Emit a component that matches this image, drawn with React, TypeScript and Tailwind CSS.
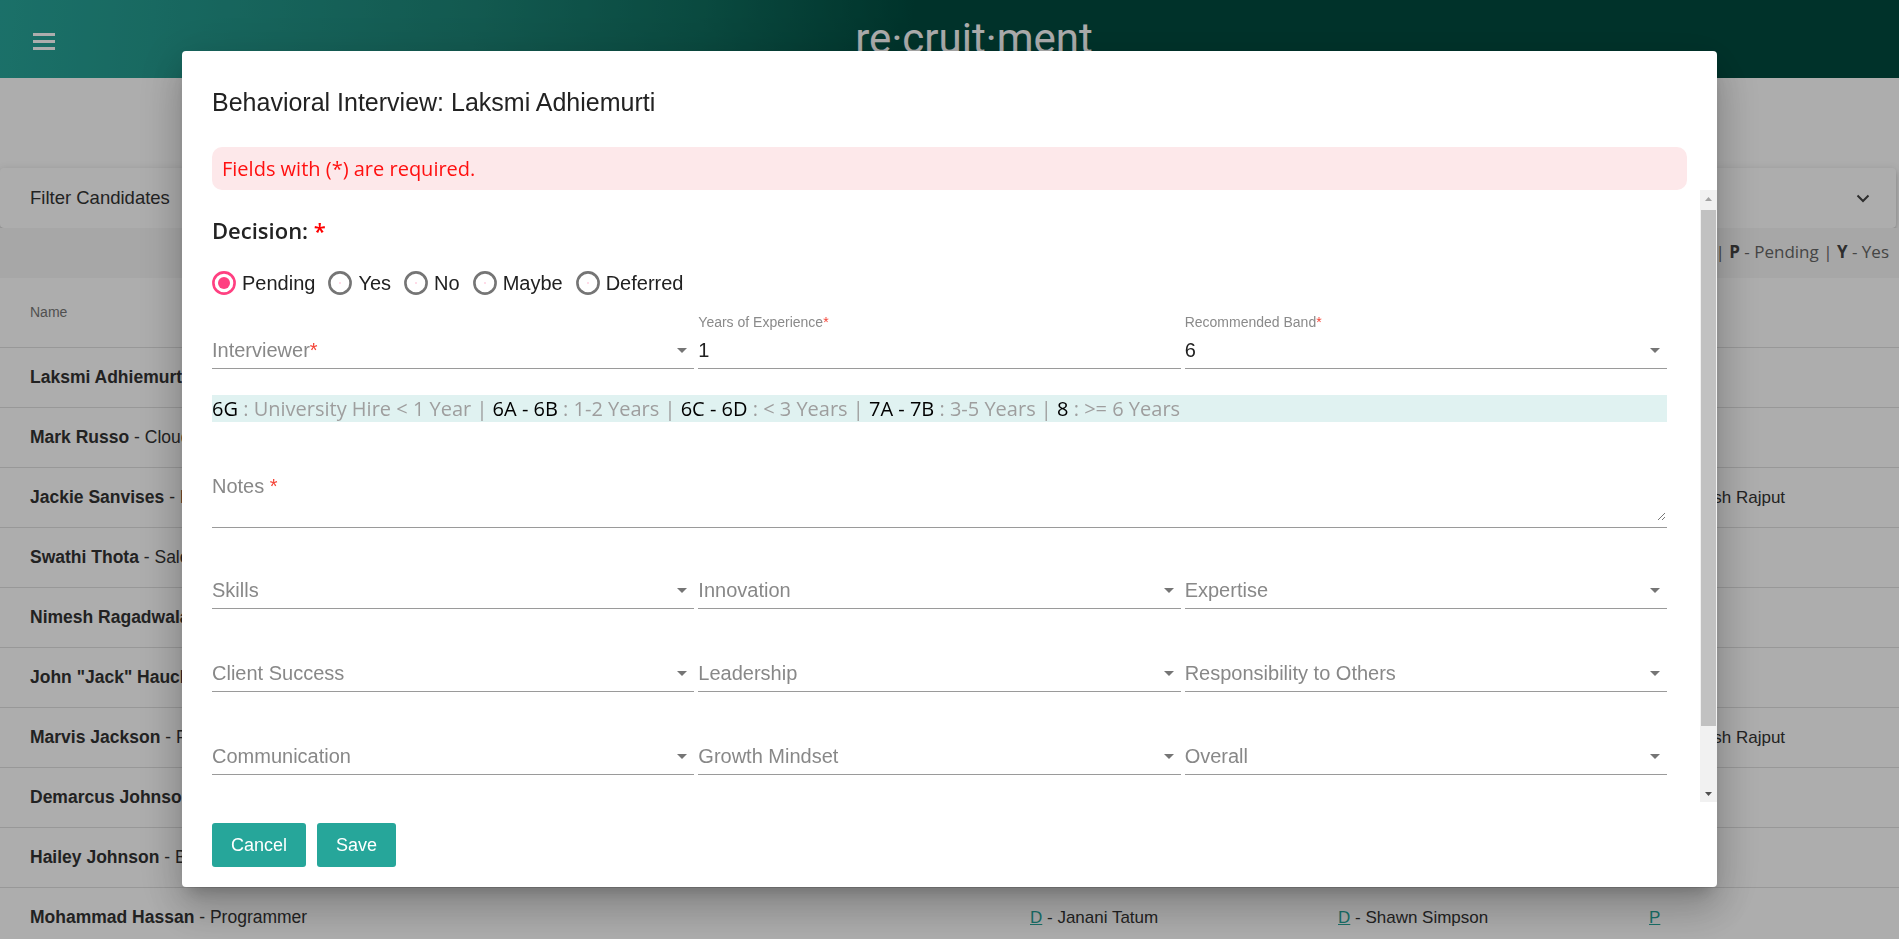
import type React from "react";

const sans = "font-['Liberation_Sans',Arial,sans-serif]";
const open = "font-['Open_Sans',sans-serif]";

type Candidate = {
  name: string;
  role: string;
  first?: string;
  second?: string;
  decision?: string;
};

const candidates: Candidate[] = [
  { name: "Laksmi Adhiemurti", role: "Programmer", first: "Janani Tatum", decision: "P" },
  { name: "Mark Russo", role: "Cloud Architect", first: "Shawn Simpson", decision: "P" },
  { name: "Jackie Sanvises", role: "IT Consultant", first: "Janani Tatum", decision: "Haresh Rajput" },
  { name: "Swathi Thota", role: "Sales Engineer", second: "Shawn Simpson", decision: "P" },
  { name: "Nimesh Ragadwala", role: "Data Scientist", first: "Janani Tatum", decision: "P" },
  { name: 'John "Jack" Hauck', role: "Developer", second: "Shawn Simpson", decision: "P" },
  { name: "Marvis Jackson", role: "Project Manager", first: "Janani Tatum", decision: "Haresh Rajput" },
  { name: "Demarcus Johnson", role: "Designer", first: "Shawn Simpson", decision: "P" },
  { name: "Hailey Johnson", role: "Business Analyst", second: "Janani Tatum", decision: "P" },
  { name: "Mohammad Hassan", role: "Programmer", first: "Janani Tatum", second: "Shawn Simpson", decision: "P" },
];

const Link: React.FC<{ code: string; who?: string }> = ({ code, who }) => (
  <span className="text-[17px] text-[#333]">
    <span className="text-[#26a69a] underline">{code}</span>
    {who && <> - {who}</>}
  </span>
);

const Radio: React.FC<{ label: string; checked?: boolean }> = ({ label, checked }) => (
  <label className="mr-[13px] flex items-center gap-[6px]">
    <svg width="24" height="24" viewBox="0 0 24 24">
      <circle
        cx="12"
        cy="12"
        r="10.6"
        fill="none"
        stroke={checked ? "#ff4081" : "#757575"}
        strokeWidth="2.6"
      />
      {checked ? (
        <circle cx="12" cy="12" r="6" fill="#ff4081" />
      ) : (
        <circle cx="12" cy="12" r="0.7" fill="#ff4081" opacity="0.5" />
      )}
    </svg>
    <span className="text-[20px] leading-[24px] text-[#212121]">{label}</span>
  </label>
);

const Req = () => <span className="text-[#f44336]">*</span>;

const Arrow = () => (
  <svg width="10" height="5" viewBox="0 0 10 5" className="mr-[7px] shrink-0">
    <path d="M0 0h10L5 5z" fill="#757575" />
  </svg>
);

// Material-ish select / input with an underline; `floating` reserves the label line
const Field: React.FC<{
  label: string;
  value?: string;
  required?: boolean;
  arrow?: boolean;
  floating?: boolean;
}> = ({ label, value, required, arrow = true, floating }) => (
  <div className="flex flex-col border-b border-[#9a9a9a] pb-[6px]">
    {floating && (
      <div className="mb-[8px] h-[16px] text-[14px] leading-[16px] text-[#8a8a8a]">
        {value && (
          <>
            {label}
            {required && <Req />}
          </>
        )}
      </div>
    )}
    <div className="flex h-[24px] items-center">
      <span
        className={`flex-1 text-[20px] leading-[24px] ${
          value ? "text-[#212121]" : "text-[#888]"
        }`}
      >
        {value ?? (
          <>
            {label}
            {required && <Req />}
          </>
        )}
      </span>
      {arrow && <Arrow />}
    </div>
  </div>
);

const bands: [string, string][] = [
  ["6G", "University Hire < 1 Year"],
  ["6A - 6B", "1-2 Years"],
  ["6C - 6D", "< 3 Years"],
  ["7A - 7B", "3-5 Years"],
  ["8", ">= 6 Years"],
];

const App: React.FC = () => {
  return (
    <div className={`relative h-screen w-full overflow-hidden bg-white ${sans}`}>
      {/* App bar */}
      <header className="flex h-[78px] items-start bg-[linear-gradient(95deg,#28a69b_0%,#1c8476_25%,#0f6d5e_37%,#004b3f_48%,#004b3f_100%)]">
        <div className="ml-[33px] mt-[33px] flex flex-col gap-[4px]">
          <span className="h-[3px] w-[22px] bg-white" />
          <span className="h-[3px] w-[22px] bg-white" />
          <span className="h-[3px] w-[22px] bg-white" />
        </div>
        <div className="flex-1 pr-[6px] pt-[14px] text-center font-['Roboto',sans-serif] text-[42px] font-normal leading-[49px] text-white">
          re·cruit·ment
        </div>
      </header>

      {/* Filter panel */}
      <div className="mr-[3px] mt-[90px] flex h-[60px] items-center justify-between rounded-[4px] bg-white pl-[30px] pr-[26px] shadow-[0_3px_3px_-2px_rgba(0,0,0,0.2),0_3px_4px_0_rgba(0,0,0,0.14),0_1px_8px_0_rgba(0,0,0,0.12)]">
        <span className="text-[18.5px] text-[#333]">Filter Candidates</span>
        <svg width="14" height="9" viewBox="0 0 14 9">
          <path d="M1.5 1.5 7 7l5.5-5.5" fill="none" stroke="#444" strokeWidth="2" />
        </svg>
      </div>

      {/* Legend */}
      <div className={`flex h-[50px] items-center justify-end bg-[#f7f7f7] pb-[2px] pr-[10px] text-[17px] text-[#666] ${open}`}>
        <b className="text-[#444]">A</b>&nbsp;- Accepted |&nbsp;<b className="text-[#444]">D</b>&nbsp;- Declined |&nbsp;
        <b className="text-[#444]">M</b>&nbsp;- Maybe |&nbsp;<b className="text-[#444]">N</b>&nbsp;- No |&nbsp;
        <b className="text-[#444]">P</b>&nbsp;- Pending |&nbsp;<b className="text-[#444]">Y</b>&nbsp;- Yes
      </div>

      {/* Candidate table */}
      <div className="grid h-[70px] grid-cols-[1000px_308px_311px_1fr] items-center border-b border-[#e0e0e0] pl-[30px] text-[14px] text-[#777]">
        <span>Name</span>
        <span>First Interview</span>
        <span>Second Interview</span>
        <span>Decision</span>
      </div>
      {candidates.map((c) => (
        <div
          key={c.name}
          className="grid h-[60px] grid-cols-[1000px_308px_311px_1fr] items-center border-b border-[#e0e0e0] pl-[30px]"
        >
          <span className="whitespace-nowrap text-[17.5px] text-[#333]">
            <b>{c.name}</b> - {c.role}
          </span>
          <span>{c.first && <Link code="D" who={c.first} />}</span>
          <span>{c.second && <Link code="D" who={c.second} />}</span>
          <span className="whitespace-nowrap">
            {c.decision === "P" ? (
              <Link code="P" />
            ) : (
              <Link code="D" who={c.decision} />
            )}
          </span>
        </div>
      ))}

      {/* Dialog */}
      <div className="fixed inset-0 flex items-start justify-center bg-black/[0.32] pt-[51px]">
        <div className="flex h-[836px] w-[1535px] flex-col rounded-[4px] bg-white shadow-[0_11px_15px_-7px_rgba(0,0,0,0.2),0_24px_38px_3px_rgba(0,0,0,0.14),0_9px_46px_8px_rgba(0,0,0,0.12)]">
          <h2 className="px-[30px] pt-[37px] text-[25px] leading-[28px] text-[#222]">
            Behavioral Interview: Laksmi Adhiemurti
          </h2>

          <div
            className={`mx-[30px] mt-[31px] flex h-[43px] items-center rounded-[10px] bg-[#fde8ea] pl-[10px] text-[20px] text-[#ff1010] ${open}`}
          >
            Fields with (*) are required.
          </div>

          <div className="flex h-[612px]">
            <div className="flex-1 overflow-hidden pl-[30px] pr-[33px]">
              <div className={`mt-[26px] h-[28px] text-[22px] font-semibold leading-[28px] text-[#222] ${open}`}>
                Decision: <span className="text-[#f00]">*</span>
              </div>

              <div className="mt-[27px] flex h-[24px] items-center">
                <Radio label="Pending" checked />
                <Radio label="Yes" />
                <Radio label="No" />
                <Radio label="Maybe" />
                <Radio label="Deferred" />
              </div>

              <div className="mt-[19px] grid grid-cols-3 gap-x-[4px]">
                <Field label="Interviewer" required floating />
                <Field label="Years of Experience" value="1" required floating arrow={false} />
                <Field label="Recommended Band" value="6" required floating />
              </div>

              <div className={`mt-[26px] h-[27px] whitespace-nowrap bg-[#e0f2f1] text-[20px] leading-[27px] text-[#9e9e9e] ${open}`}>
                {bands.map(([code, desc], i) => (
                  <span key={code}>
                    {i > 0 && " | "}
                    <span className="text-black">{code}</span> : {desc}
                  </span>
                ))}
              </div>

              <div className="mt-[38px] flex h-[68px] flex-col justify-between border-b border-[#9a9a9a] pt-[14px]">
                <span className="text-[20px] leading-[24px] text-[#888]">
                  Notes <Req />
                </span>
                <div className="flex justify-end pb-[6px] pr-[1px]">
                  <svg width="10" height="10" viewBox="0 0 10 10">
                    <path d="M9 2 2 9M9 6 6 9" stroke="#777" strokeWidth="1" />
                  </svg>
                </div>
              </div>

              <div className="mt-[50px] grid grid-cols-3 gap-x-[4px] gap-y-[52px]">
                <Field label="Skills" />
                <Field label="Innovation" />
                <Field label="Expertise" />
                <Field label="Client Success" />
                <Field label="Leadership" />
                <Field label="Responsibility to Others" />
                <Field label="Communication" />
                <Field label="Growth Mindset" />
                <Field label="Overall" />
              </div>
            </div>

            {/* scrollbar */}
            <div className="flex w-[17px] flex-col bg-[#f1f1f1]">
              <div className="flex h-[17px] items-center justify-center">
                <svg width="7" height="4" viewBox="0 0 7 4">
                  <path d="M0 4 3.5 0 7 4z" fill="#a3a3a3" />
                </svg>
              </div>
              <div className="mx-[1px] mt-[3px] h-[516px] bg-[#c1c1c1]" />
              <div className="flex-1" />
              <div className="flex h-[17px] items-center justify-center">
                <svg width="7" height="4" viewBox="0 0 7 4">
                  <path d="M0 0h7L3.5 4z" fill="#505050" />
                </svg>
              </div>
            </div>
          </div>

          <div className="mt-[21px] flex gap-[11px] px-[30px]">
            <button
              type="button"
              className="h-[44px] rounded-[3px] bg-[#26a69a] px-[19px] text-[18px] text-white"
            >
              Cancel
            </button>
            <button
              type="button"
              className="h-[44px] rounded-[3px] bg-[#26a69a] px-[19px] text-[18px] text-white"
            >
              Save
            </button>
          </div>
        </div>
      </div>
    </div>
  );
};

export default App;
